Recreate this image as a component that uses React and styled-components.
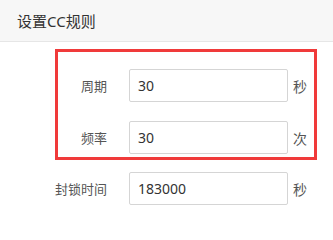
import React from "react";
import styled, { createGlobalStyle } from "styled-components";

const Global = createGlobalStyle`
  html, body { margin: 0; padding: 0; background: #fff; }
  body { font-family: "Noto Sans", "Noto Sans CJK SC", sans-serif; }
  * { box-sizing: border-box; }
`;

const Page = styled.div`
  width: 333px;
  height: 219px;
  overflow: hidden;
  background: #fff;
`;

const Header = styled.div`
  height: 42px;
  background: #f7f7f7;
  border-bottom: 1px solid #e6e6e6;
  display: flex;
  align-items: center;
  padding: 0 0 1px 17px;
  font-size: 15px;
  color: #333;
`;

const Body = styled.div`
  display: flex;
  flex-direction: column;
  padding-top: 7px;
`;

const Highlight = styled.div`
  margin-left: 55px;
  width: 262px;
  border: 3px solid #f03a3a;
  padding: 17px 0 3px;
  display: flex;
  flex-direction: column;
  gap: 19px;
`;

const Row = styled.div`
  display: flex;
  align-items: center;
  margin-top: ${(p) => p.$top || 0}px;
`;

const Label = styled.div`
  width: ${(p) => p.$width}px;
  text-align: right;
  font-size: 13px;
  color: #555;
  margin-right: 22px;
  white-space: nowrap;
`;

const Input = styled.input`
  width: 159px;
  height: 33px;
  border: 1px solid #d5d5d5;
  border-radius: 2px;
  padding: 0 8px;
  font-family: "Noto Sans", "Noto Sans CJK SC", sans-serif;
  font-size: 14px;
  color: #333;
  outline: none;
  background: #fff;
`;

const Unit = styled.span`
  margin-left: 5px;
  font-size: 14px;
  color: #555;
`;

export default function App() {
  return (
    <Page>
      <Global />
      <Header>设置CC规则</Header>
      <Body>
        <Highlight>
          <Row>
            <Label $width={49}>周期</Label>
            <Input defaultValue="30" />
            <Unit>秒</Unit>
          </Row>
          <Row>
            <Label $width={49}>频率</Label>
            <Input defaultValue="30" />
            <Unit>次</Unit>
          </Row>
        </Highlight>
        <Row $top={12}>
          <Label $width={107}>封锁时间</Label>
          <Input defaultValue="183000" />
          <Unit>秒</Unit>
        </Row>
      </Body>
    </Page>
  );
}
